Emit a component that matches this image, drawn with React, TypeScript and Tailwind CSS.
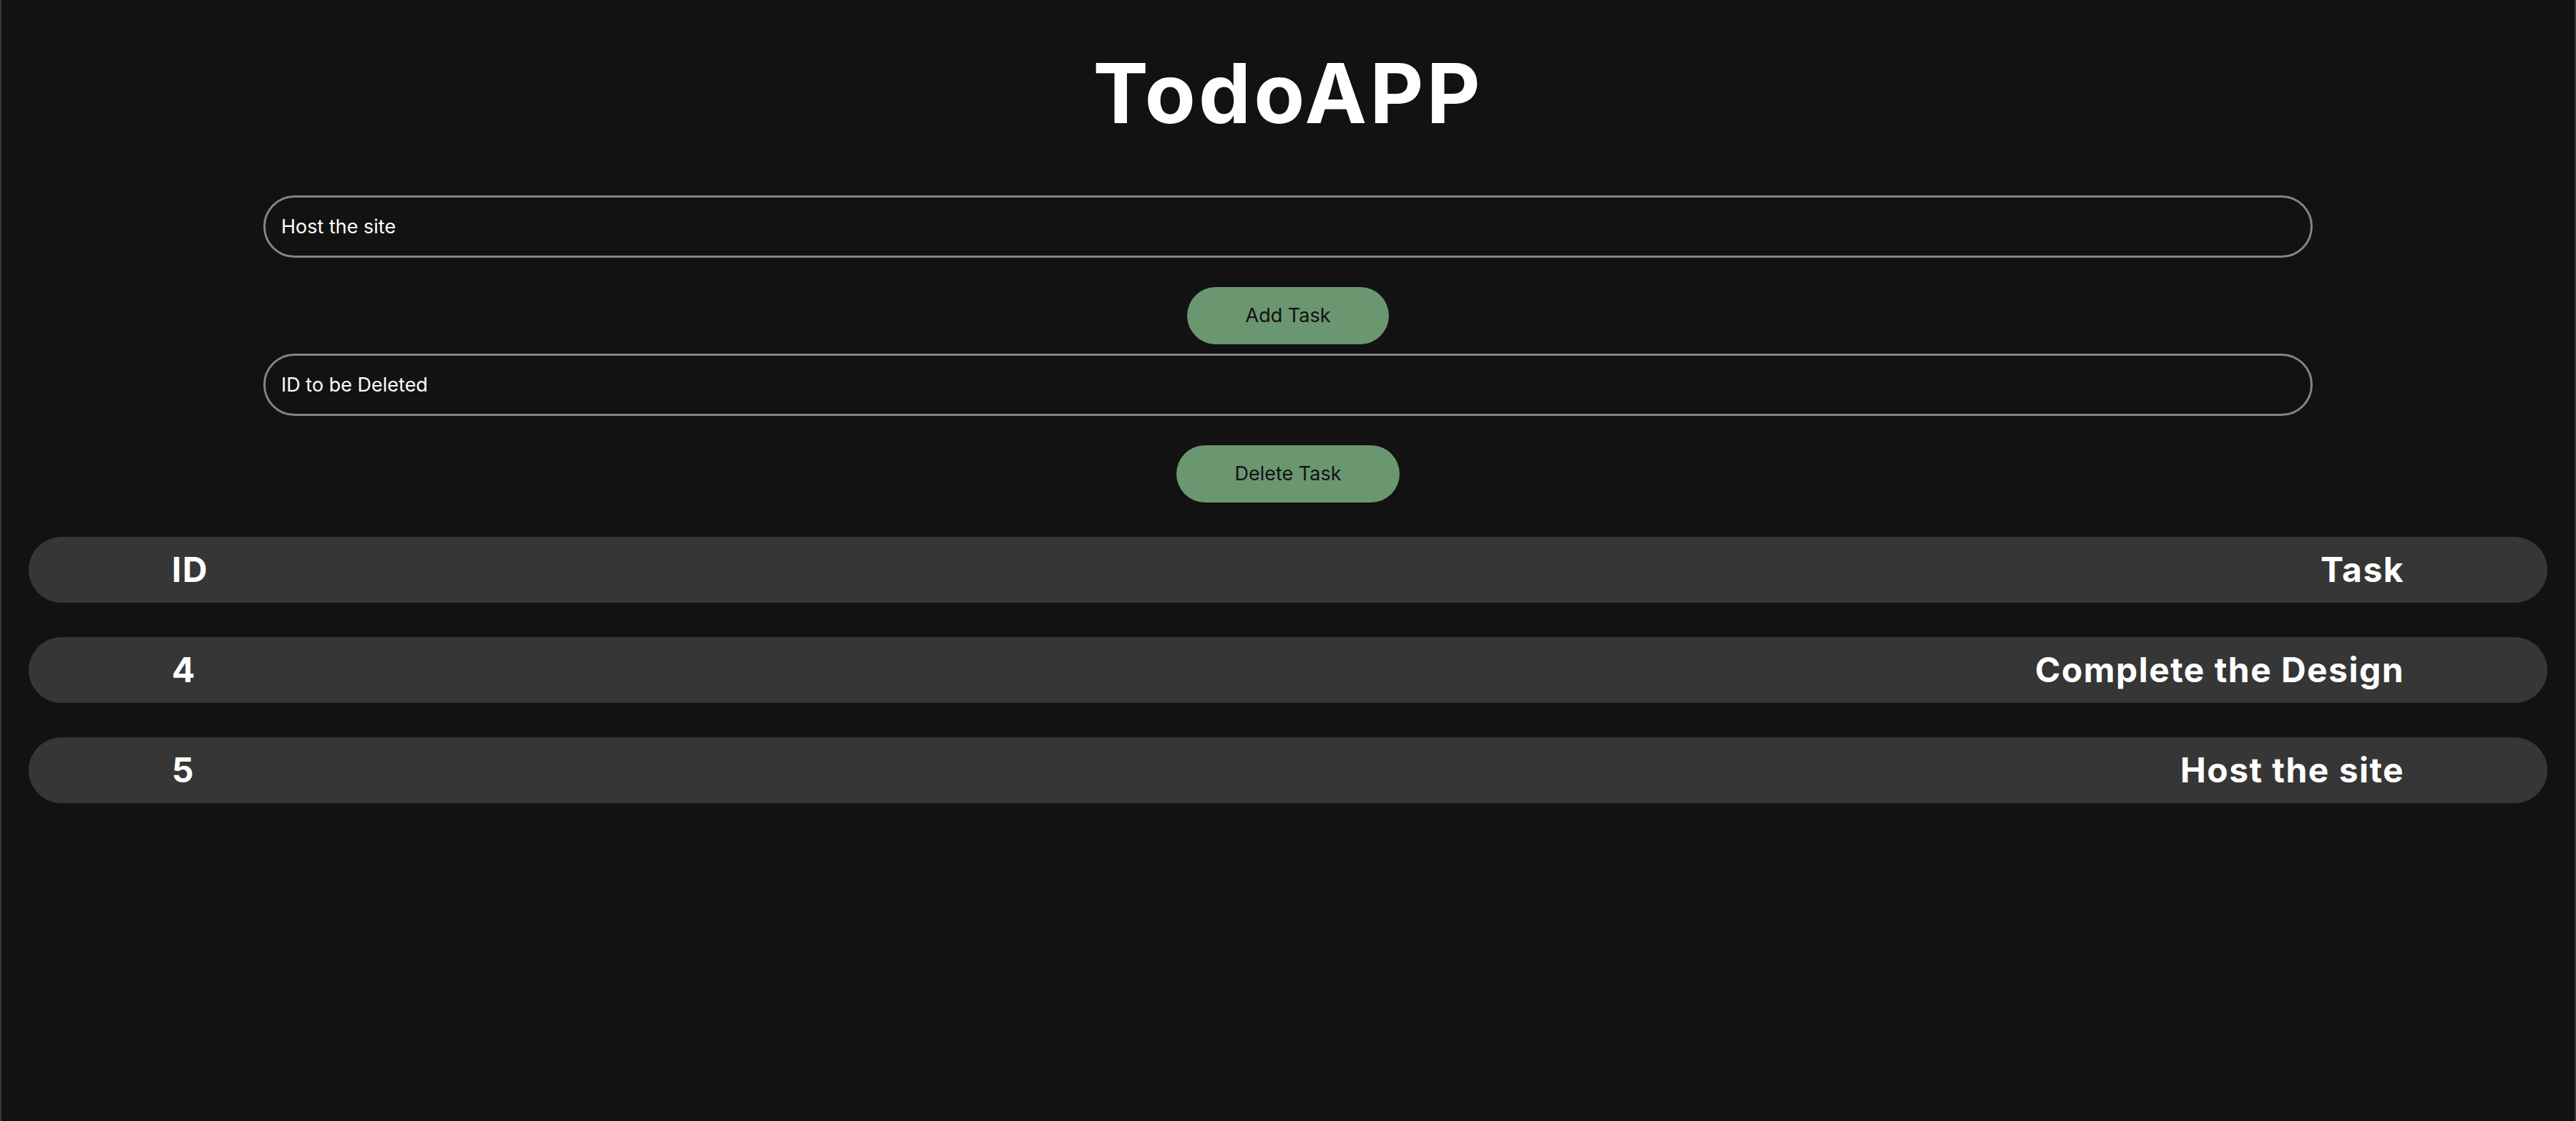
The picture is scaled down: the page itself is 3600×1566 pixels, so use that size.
import { useState } from "react";

type Todo = { id: number; task: string };

const font = { fontFamily: "Inter, 'Liberation Sans', sans-serif" };

const App = () => {
  const [task, setTask] = useState("Host the site");
  const [delId, setDelId] = useState("");
  const [todos] = useState<Todo[]>([
    { id: 4, task: "Complete the Design" },
    { id: 5, task: "Host the site" },
  ]);

  return (
    <div
      className="min-h-screen bg-[#121212] text-white border-x-2 border-[#3a3a3a] pb-10"
      style={font}
    >
      {/* Title */}
      <h1 className="pt-[72px] text-center text-[116px] leading-none font-bold tracking-[0.035em]">
        TodoAPP
      </h1>

      {/* Form */}
      <div className="w-[2864px] mx-auto mt-[85px] flex flex-col items-center">
        <input
          value={task}
          onChange={(e) => setTask(e.target.value)}
          className="w-full h-[87px] rounded-full border-[3px] border-[#858585] bg-transparent px-[22px] text-[27px] text-white outline-none"
        />
        <button className="mt-[41px] h-[80px] w-[282px] rounded-full bg-[#6a9670] text-[27px] text-[#111]">
          Add Task
        </button>
        <input
          value={delId}
          onChange={(e) => setDelId(e.target.value)}
          placeholder="ID to be Deleted"
          className="mt-[13px] w-full h-[87px] rounded-full border-[3px] border-[#858585] bg-transparent px-[22px] text-[27px] text-white placeholder:text-white outline-none"
        />
        <button className="mt-[41px] h-[80px] w-[312px] rounded-full bg-[#6a9670] text-[27px] text-[#111]">
          Delete Task
        </button>
      </div>

      {/* Table */}
      <div className="mt-[48px] px-[38px] flex flex-col gap-[48px]">
        <div className="h-[92px] rounded-full bg-[#363636] flex items-center justify-between px-[200px] text-[48px] font-bold tracking-[0.03em]">
          <span>ID</span>
          <span>Task</span>
        </div>
        {todos.map((t) => (
          <div
            key={t.id}
            className="h-[92px] rounded-full bg-[#363636] flex items-center justify-between px-[200px] text-[48px] font-bold tracking-[0.03em]"
          >
            <span>{t.id}</span>
            <span>{t.task}</span>
          </div>
        ))}
      </div>
    </div>
  );
};

export default App;
